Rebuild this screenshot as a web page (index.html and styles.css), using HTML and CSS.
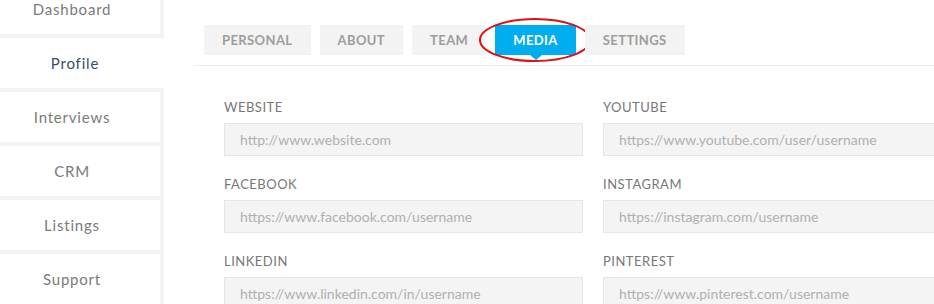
FILE: index.html
```html
<!DOCTYPE html>
<html>
<head>
<meta charset="utf-8">
<link rel="stylesheet" href="styles.css">
</head>
<body>
<div class="page">
  <aside class="sidebar">
    <a class="nav-item">Dashboard</a>
    <a class="nav-item active">Profile</a>
    <a class="nav-item">Interviews</a>
    <a class="nav-item">CRM</a>
    <a class="nav-item">Listings</a>
    <a class="nav-item">Support</a>
  </aside>
  <main class="content">
    <nav class="tabs">
      <span class="tab">PERSONAL</span>
      <span class="tab">ABOUT</span>
      <span class="tab">TEAM</span>
      <span class="tab active">MEDIA
        <svg class="annot" viewBox="0 0 114 46" width="114" height="46"><ellipse cx="57" cy="23" rx="55" ry="21" fill="none" stroke="#e01010" stroke-width="2"/></svg>
      </span>
      <span class="tab">SETTINGS</span>
    </nav>
    <form class="form">
      <div class="field"><label>WEBSITE</label><input placeholder="http://www.website.com"></div>
      <div class="field"><label>YOUTUBE</label><input placeholder="https://www.youtube.com/user/username"></div>
      <div class="field"><label>FACEBOOK</label><input placeholder="https://www.facebook.com/username"></div>
      <div class="field"><label>INSTAGRAM</label><input placeholder="https://instagram.com/username"></div>
      <div class="field"><label>LINKEDIN</label><input placeholder="https://www.linkedin.com/in/username"></div>
      <div class="field"><label>PINTEREST</label><input placeholder="https://www.pinterest.com/username"></div>
    </form>
  </main>
</div>
</body>
</html>
```
FILE: styles.css
```css
html, body {
  margin: 0;
  padding: 0;
  background: #fff;
  overflow: hidden;
  font-family: Lato, "Open Sans", sans-serif;
}
.page {
  display: flex;
  width: 934px;
  height: 304px;
  overflow: hidden;
}
.sidebar {
  width: 164px;
  flex: none;
  background: #f3f3f3;
  display: flex;
  flex-direction: column;
  gap: 4px;
  margin-top: -16px;
  height: 340px;
}
.nav-item {
  box-sizing: border-box;
  display: flex;
  align-items: center;
  justify-content: center;
  width: 160px;
  height: 50px;
  padding-right: 16px;
  flex: none;
  background: #fff;
  color: #7a7a7a;
  font-size: 15px;
  letter-spacing: 0.8px;
}
.nav-item.active {
  width: 164px;
  padding-right: 14px;
  color: #3c4d62;
}
.content {
  margin-left: 29px;
  flex: none;
  width: 800px;
}
.tabs {
  display: flex;
  gap: 9px;
  padding: 25px 0 10px 11px;
  border-bottom: 1px solid #eeeeee;
}
.tab {
  position: relative;
  height: 30px;
  padding: 0 18px;
  display: flex;
  align-items: center;
  background: #f3f3f3;
  color: #9d9d9d;
  font-weight: 700;
  font-size: 13px;
  letter-spacing: 0.4px;
}
.tab.active {
  background: #00aeef;
  color: #fff;
}
.tab.active::after {
  content: "";
  position: absolute;
  left: 50%;
  top: 30px;
  margin-left: -6px;
  border-left: 6px solid transparent;
  border-right: 6px solid transparent;
  border-top: 5px solid #00aeef;
}
.annot {
  position: absolute;
  left: -17px;
  top: -8px;
  overflow: visible;
}
.form {
  display: grid;
  grid-template-columns: 359px 359px;
  column-gap: 20px;
  row-gap: 20px;
  padding: 33px 0 0 31px;
  margin: 0;
}
.field {
  display: flex;
  flex-direction: column;
}
.field label {
  font-size: 13px;
  line-height: 16px;
  color: #777;
  letter-spacing: 0.5px;
  margin-bottom: 8px;
}
.field input {
  box-sizing: border-box;
  height: 33px;
  width: 359px;
  border: 1px solid #e6e6e6;
  background: #f4f4f4;
  padding: 0 15px;
  font-family: Lato, "Open Sans", sans-serif;
  font-size: 14px;
  color: #555;
  outline: none;
}
.field input::placeholder {
  color: #b0b0b0;
}
```
